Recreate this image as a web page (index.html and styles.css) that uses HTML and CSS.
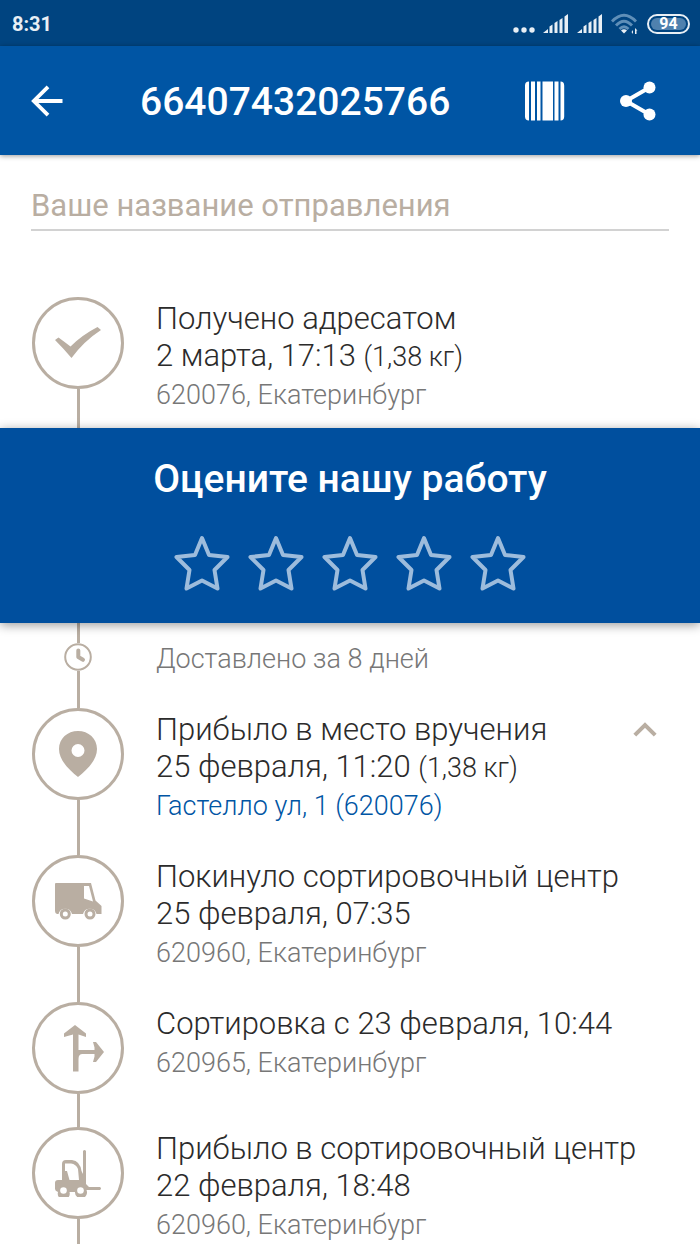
FILE: index.html
```html
<!DOCTYPE html>
<html lang="ru">
<head>
<meta charset="utf-8">
<meta name="viewport" content="width=device-width, initial-scale=1">
<title>66407432025766</title>
<link rel="stylesheet" href="styles.css">
</head>
<body>
<div class="status-bar">
  <span class="clock">8:31</span>
  <div class="indicators">
    <svg class="dots" width="22" height="20" viewBox="0 0 22 20"><circle cx="3" cy="16" r="2.7"/><circle cx="11" cy="16" r="2.7"/><circle cx="19" cy="16" r="2.7"/></svg>
    <svg width="26" height="20" viewBox="0 0 26 20"><path d="M0 19l5-4v4zM6.500 12.500l3-2V19h-3zM11.500 9l3-2v12h-3zM16.500 6l3-2v15h-3zM21.500 2.500L25 0v19h-3.500z"/></svg>
    <svg width="26" height="20" viewBox="0 0 26 20"><path d="M0 19l5-4v4zM6.500 12.500l3-2V19h-3zM11.500 9l3-2v12h-3zM16.500 6l3-2v15h-3zM21.500 2.500L25 0v19h-3.500z"/></svg>
    <svg class="wifi" width="28" height="22" viewBox="0 0 28 22"><g fill="none" stroke="#5f8fb8" stroke-width="2.800"><path d="M1 8.500Q13 -4 25 8.500"/><path d="M5 12.500Q13 4 21 12.500"/><path d="M8.500 16Q13 11.500 17.500 16"/></g><path d="M10 17.500q3-2.500 6 0l-3 3z"/><path d="M24 15l2.500 2.500h-1V21H24zM22 17v4l-1.500-2z"/></svg>
    <span class="battery"><span class="charge">94</span></span>
  </div>
</div>
<header class="app-bar">
  <button class="icon-button" type="button" aria-label="Назад">
    <svg width="32" height="32" viewBox="0 0 32 32" fill="none" stroke="#fff" stroke-width="3.800"><path d="M31.500 16H3M17 1.800L2.800 16 17 30.200"/></svg>
  </button>
  <h1 class="track-number">66407432025766</h1>
  <button class="icon-button barcode" type="button" aria-label="Штрихкод">
    <svg width="40" height="40" viewBox="0 0 40 40" fill="#fff"><path d="M4 0.500V39.500Q0 39.500 0 35.500V4.500Q0 0.500 4 0.500zM6 .5h4v39H6zM12 .5h3.500v39H12zM17.500 .5H28v39H17.500zM29.500 .5h4v39h-4zM35.500 .5q3.700 0 3.700 4v31q0 4-3.700 4z"/></svg>
  </button>
  <button class="icon-button" type="button" aria-label="Поделиться">
    <svg width="36" height="40" viewBox="0 0 36 40" fill="#fff"><path d="M29.500 6.500L6 20l23.500 13.500" fill="none" stroke="#fff" stroke-width="4"/><circle cx="29.500" cy="6.500" r="6"/><circle cx="6" cy="20" r="6"/><circle cx="29.500" cy="33.500" r="6"/></svg>
  </button>
</header>
<main class="content">
  <div class="name-field">
    <input class="name-input" type="text" aria-label="Ваше название отправления" placeholder="Ваше название отправления">
  </div>
  <ol class="timeline">
    <li class="step">
      <div class="rail">
        <span class="marker"><svg width="48" height="32" viewBox="0 0 48 32"><path d="M1 13L4.500 10.500Q10 14.500 16.500 19.500Q28 8 43.500 0L47 3Q30 14 17.500 31Q10 22 1 13z"/></svg></span>
        <span class="line"></span>
      </div>
      <div class="info first">
        <h2 class="event">Получено адресатом</h2>
        <p class="event">2 марта, 17:13 <small class="weight">(1,38 кг)</small></p>
        <p class="place">620076, Екатеринбург</p>
      </div>
    </li>
    <li class="rating">
      <h2 class="rating-title">Оцените нашу работу</h2>
      <div class="stars">
        <button class="star" type="button" aria-label="1"><svg width="56" height="56" viewBox="0 0 56 56"><path d="M28 3L35 20 53.500 22 40.500 35 43.500 53.500 28 45.500 12.500 53.500 15.500 35 2.500 22 21 20z"/></svg></button>
        <button class="star" type="button" aria-label="2"><svg width="56" height="56" viewBox="0 0 56 56"><path d="M28 3L35 20 53.500 22 40.500 35 43.500 53.500 28 45.500 12.500 53.500 15.500 35 2.500 22 21 20z"/></svg></button>
        <button class="star" type="button" aria-label="3"><svg width="56" height="56" viewBox="0 0 56 56"><path d="M28 3L35 20 53.500 22 40.500 35 43.500 53.500 28 45.500 12.500 53.500 15.500 35 2.500 22 21 20z"/></svg></button>
        <button class="star" type="button" aria-label="4"><svg width="56" height="56" viewBox="0 0 56 56"><path d="M28 3L35 20 53.500 22 40.500 35 43.500 53.500 28 45.500 12.500 53.500 15.500 35 2.500 22 21 20z"/></svg></button>
        <button class="star" type="button" aria-label="5"><svg width="56" height="56" viewBox="0 0 56 56"><path d="M28 3L35 20 53.500 22 40.500 35 43.500 53.500 28 45.500 12.500 53.500 15.500 35 2.500 22 21 20z"/></svg></button>
      </div>
    </li>
    <li class="step">
      <div class="rail">
        <span class="stub"></span>
        <svg width="28" height="28" viewBox="0 0 28 28"><circle cx="14" cy="14" r="12.800" fill="none" stroke="#b9aea2" stroke-width="2"/><path d="M14.300 7.500V14l4.700 2.800" fill="none" stroke="#b9aea2" stroke-width="4" stroke-linecap="round" stroke-linejoin="round"/></svg>
        <span class="line"></span>
      </div>
      <p class="duration">Доставлено за 8 дней</p>
    </li>
    <li class="step">
      <div class="rail">
        <span class="marker"><svg width="38" height="48" viewBox="0 0 38 48"><path fill-rule="evenodd" d="M19 1C8.500 1 0 8.500 0 19c0 11 10 21 19 28 9-7 19-17 19-28C38 8.500 29.500 1 19 1zM19 14a6.500 6.500 0 1 1 0 13 6.500 6.500 0 0 1 0-13z"/></svg></span>
        <span class="line"></span>
      </div>
      <div class="info">
        <h2 class="event">Прибыло в место вручения</h2>
        <p class="event">25 февраля, 11:20 <small class="weight">(1,38 кг)</small></p>
        <p class="place"><a class="address" href="#office">Гастелло ул, 1 (620076)</a></p>
      </div>
      <button class="collapse" type="button" aria-label="Свернуть"><svg width="24" height="16" viewBox="0 0 24 16" fill="none" stroke="#b9aea2" stroke-width="4"><path d="M1.800 13.200L12 3l10.200 10.200"/></svg></button>
    </li>
    <li class="step">
      <div class="rail">
        <span class="marker"><svg width="48" height="38" viewBox="0 0 48 38"><path fill-rule="evenodd" d="M2 1H37l4.500 17.500L47.500 24V32H42.500A7 7 0 0 0 29 32H18A7 7 0 0 0 4.500 32H3Q1 31.500 1 29V2Q1 1 2 1zM30 4V16.500L39 19.500 35 4z"/><circle cx="11.300" cy="32" r="4" fill="none" stroke="#b9aea2" stroke-width="3"/><circle cx="36" cy="32" r="4" fill="none" stroke="#b9aea2" stroke-width="3"/></svg></span>
        <span class="line"></span>
      </div>
      <div class="info">
        <h2 class="event">Покинуло сортировочный центр</h2>
        <p class="event">25 февраля, 07:35</p>
        <p class="place">620960, Екатеринбург</p>
      </div>
    </li>
    <li class="step">
      <div class="rail">
        <span class="marker"><svg class="route" width="40" height="48" viewBox="0 0 40 48"><path d="M11 1L22 9.500V13L14.500 10.500V26H30.500V23.500L29 18H32L40 28 32 38H29L30.500 32.500V30H18.500Q14.500 30 14.500 35V47.500H9V10.500L0 13V9.500z"/></svg></span>
        <span class="line"></span>
      </div>
      <div class="info">
        <h2 class="event">Сортировка с 23 февраля, 10:44</h2>
        <p class="place">620965, Екатеринбург</p>
      </div>
    </li>
    <li class="step last">
      <div class="rail">
        <span class="marker"><svg width="48" height="48" viewBox="0 0 48 48"><path fill-rule="evenodd" d="M29 2Q30.500 0 32 2V35L35 38H46Q48 39.500 46 41H32.500A6 6 0 1 1 21 43H15.500A6 6 0 1 1 4 43Q1 42 1 40V34Q1 31 4 31H8V15Q8 11 12 11H18Q26 12 27.500 22L29 25zM11 14.500V22H13L15.500 31H25L24 20Q22 15 17 14.500z"/><g fill="#fff"><circle cx="9.500" cy="41.500" r="3.300"/><circle cx="26.500" cy="41.500" r="3.300"/></g></svg></span>
        <span class="line"></span>
      </div>
      <div class="info">
        <h2 class="event">Прибыло в сортировочный центр</h2>
        <p class="event">22 февраля, 18:48</p>
        <p class="place">620960, Екатеринбург</p>
      </div>
    </li>
  </ol>
</main>
</body>
</html>
```
FILE: styles.css
```css
* {
  box-sizing: border-box;
}

body {
  display: flex;
  flex-direction: column;
  min-height: 100vh;
  margin: 0;
  background: #fff;
  color: #2b2b2b;
  font-family: Roboto, sans-serif;
}

h1, h2, p, ol {
  margin: 0;
  padding: 0;
}

button {
  padding: 0;
  border: 0;
  background: none;
  font: inherit;
  cursor: pointer;
}

svg {
  display: block;
}

.status-bar {
  display: flex;
  align-items: center;
  justify-content: space-between;
  height: 46px;
  padding: 2px 10px 0 12px;
  background: #004480;
  color: #e8eff5;
  font-size: 20px;
  font-weight: 700;
}

.indicators {
  display: flex;
  align-items: center;
  gap: 8px;
  fill: #e8eff5;
}

.battery {
  display: flex;
  width: 43px;
  height: 20px;
  padding: 2px;
  border: 2px solid #e8eff5;
  border-radius: 10px;
}

.charge {
  flex: 1;
  border-radius: 6px;
  background: #4f81ae;
  color: #fff;
  font-size: 16px;
  line-height: 12px;
  text-align: center;
}

.app-bar {
  display: flex;
  align-items: center;
  height: 109px;
  padding: 0 44px 0 31px;
  background: #0055a4;
  box-shadow: 0 1px 5px rgba(0, 0, 0, 0.4);
  z-index: 1;
}

.track-number {
  flex: 1;
  padding: 3px 0 0 77px;
  color: #fff;
  font-size: 39px;
  font-weight: 500;
  line-height: 48px;
}

.barcode {
  margin-right: 55px;
}

.content {
  display: flex;
  flex: 1;
  flex-direction: column;
}

.name-field {
  padding: 24px 31px 0;
}

.name-input {
  width: 100%;
  height: 52px;
  padding: 2px 0 0;
  border: 0;
  border-bottom: 2px solid #d2d2d2;
  outline: 0;
  background: none;
  color: #2b2b2b;
  font: 400 31px/48px Roboto, sans-serif;
}

.name-input::placeholder {
  color: #b9aea2;
  opacity: 1;
}

.timeline {
  display: flex;
  flex: 1;
  flex-direction: column;
  padding-top: 66px;
  list-style: none;
}

.step {
  display: flex;
  align-items: stretch;
}

.last {
  flex: 1;
}

.rail {
  display: flex;
  flex: none;
  flex-direction: column;
  align-items: center;
  width: 92px;
  margin: 0 32px;
}

.marker {
  display: flex;
  align-items: center;
  justify-content: center;
  width: 92px;
  height: 92px;
  border: 3px solid #b9aea2;
  border-radius: 50%;
  fill: #b9aea2;
}

.route {
  margin-left: 12px;
}

.line {
  flex: 1;
  width: 3px;
  min-height: 33px;
  background: #b9aea2;
}

.stub {
  width: 3px;
  height: 20px;
  background: #b9aea2;
}

.info {
  flex: 1;
  padding: 3px 0 30px;
}

.first {
  padding-bottom: 14px;
}

.last .info {
  padding-bottom: 0;
}

.event {
  font-size: 31px;
  font-weight: 300;
  line-height: 37px;
}

.weight {
  font-size: 27px;
  line-height: 27px;
}

.place {
  padding-top: 3px;
  color: #777;
  font-size: 27px;
  font-weight: 300;
  line-height: 37px;
}

.address {
  color: #0055a4;
  text-decoration: none;
}

.duration {
  height: 85px;
  padding-top: 18px;
  color: #777;
  font-size: 27px;
  font-weight: 300;
  line-height: 37px;
}

.collapse {
  align-self: flex-start;
  margin: 14px 43px 0 0;
}

.rating {
  height: 195px;
  padding-top: 27px;
  background: #004f9e;
  box-shadow: 0 2px 10px rgba(0, 0, 0, 0.4);
  text-align: center;
  z-index: 1;
}

.rating-title {
  color: #fff;
  font-size: 39px;
  font-weight: 500;
  line-height: 48px;
}

.stars {
  display: flex;
  justify-content: center;
  gap: 18px;
  padding-top: 32px;
}

.star {
  fill: none;
  stroke: #9dbcdc;
  stroke-width: 4;
  stroke-linejoin: round;
}
```
